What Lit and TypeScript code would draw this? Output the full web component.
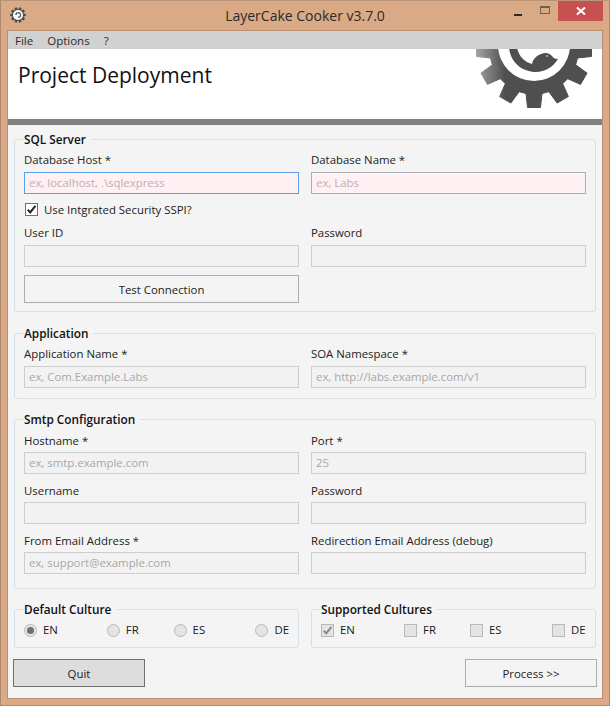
import { LitElement, html, css, svg } from "lit";
import { customElement } from "lit/decorators.js";

function gearPath(cx: number, cy: number, n: number, rTip: number, rRoot: number, hwTip: number, hwRoot: number) {
  const pts: string[] = [];
  for (let i = 0; i < n; i++) {
    const a = (i * 2 * Math.PI) / n;
    const ux = Math.cos(a), uy = Math.sin(a);
    const p = (r: number, w: number) => `${(cx + ux * r - uy * w).toFixed(2)} ${(cy + uy * r + ux * w).toFixed(2)}`;
    pts.push(p(rRoot, -hwRoot), p(rTip, -hwTip), p(rTip, hwTip), p(rRoot, hwRoot));
  }
  return "M" + pts.join("L") + "Z";
}

const Logo = () => svg`
  <svg class="logo" viewBox="476 49 116 61" aria-hidden="true">
    <defs>
      <linearGradient id="g" gradientUnits="userSpaceOnUse" x1="476" y1="0" x2="505" y2="0">
        <stop offset="0" stop-color="#a4a4a6"/><stop offset="1" stop-color="#4f4f51"/>
      </linearGradient>
    </defs>
    <path d=${gearPath(534, 50, 12, 57.5, 43.5, 6.5, 8)} fill="url(#g)" stroke="url(#g)" stroke-width="1" stroke-linejoin="round"/>
    <circle cx="534" cy="50" r="44" fill="url(#g)"/>
    <circle cx="534" cy="45" r="36" fill="#fff"/>
    <path d="M509 47 L517 47 C518 55 524 62 532 64 C533 58 539 53 546 53 C548 53 550 54 552 56 C553 58 555 59 558 59 C553 67 545 72 536 72 C522 72 510 62 509 47 Z" fill="#4f4f51"/>
    <circle cx="547" cy="56" r="0.8" fill="#fff"/>
  </svg>`;

const Icon = () => svg`
  <svg class="appicon" viewBox="0 0 16 16" aria-hidden="true">
    <path d=${gearPath(8, 8, 10, 7.8, 5.6, 1.1, 1.5)} fill="#4b4b4d"/>
    <circle cx="8" cy="8" r="5" fill="#fff"/>
    <path d="M5.2 8 a3 3 0 1 1 3 3 v-1.4 a1.7 1.7 0 1 0 -1.6 -1.6 z" fill="#555"/>
  </svg>`;

@customElement("app-root")
export class AppRoot extends LitElement {
  static styles = css`
    :host {
      display: block;
      font-family: "Open Sans", "Noto Sans", sans-serif;
      font-size: 11.4px;
      color: #1a1a1a;
    }
    * { box-sizing: border-box; }
    .window {
      width: 610px;
      height: 706px;
      background: #d9aa85;
      border: 1px solid #ad8a6e;
      border-top-color: #b8957a;
      padding: 0 7px 7px 7px;
      display: flex;
      flex-direction: column;
    }
    .titlebar {
      height: 30px;
      display: grid;
      grid-template-columns: 1fr auto 1fr;
      align-items: start;
    }
    .appicon { width: 16px; height: 16px; margin: 6px 0 0 2px; display: block; }
    .title {
      text-align: center;
      font-size: 14px;
      line-height: 30px;
      color: #2b2b2b;
    }
    .controls { display: flex; justify-content: flex-end; margin-right: -1px; }
    .ctl { width: 27px; height: 20px; display: flex; align-items: center; justify-content: center; }
    .ctl.close { width: 45px; background: #c75050; }
    .min { width: 8px; height: 2px; background: #2b2b2b; margin-top: 7px; }
    .max { width: 10px; height: 8px; border: 1px solid #6e5f52; border-top-width: 2px; margin-top: -3px; }
    .x { display: block; width: 10px; height: 10px; }
    .client {
      flex: 1;
      outline: 1px solid #b98f6f;
      display: flex;
      flex-direction: column;
      background: #f4f4f4;
      min-height: 0;
    }
    .menu {
      height: 18px;
      background: #d1d1d1;
      display: flex;
      align-items: center;
      gap: 14px;
      padding: 0 0 0 7px;
      font-size: 11.5px;
      color: #2a2a2a;
    }
    .head {
      height: 70px;
      background: #fff;
      display: flex;
      justify-content: space-between;
      align-items: flex-start;
      padding-left: 10px;
    }
    .head h1 {
      margin: 11px 0 0 0;
      font-weight: 400;
      font-size: 21px;
      line-height: 30px;
      color: #111;
    }
    .logo { width: 116px; height: 61px; margin-right: 10px; display: block; flex: none; }
    .rule { height: 6px; background: #808080; flex: none; }
    .body {
      flex: 1;
      padding: 6px 6px 0 6px;
      display: flex;
      flex-direction: column;
    }
    fieldset {
      margin: 0;
      min-width: 0;
      border: 1px solid #d6dfe6;
      border-radius: 3px;
      padding: 0 9px;
    }
    legend {
      padding: 0 5px 0 0;
      font-weight: 600;
      font-size: 11.8px;
      line-height: 17px;
      height: 16px;
      color: #111;
    }
    .grid {
      display: grid;
      grid-template-columns: 275px 275px;
      column-gap: 12px;
    }
    .field { display: flex; flex-direction: column; }
    .lbl { line-height: 14px; height: 16px; color: #222; }
    .input {
      height: 22px;
      margin-top: 3px;
      border: 1px solid #cdcdcd;
      background: #f2f2f2;
      color: #a8a8a8;
      padding: 0 0 0 4px;
      line-height: 20px;
      white-space: nowrap;
      overflow: hidden;
    }
    .input.req { background: #fef0f3; border-color: #abadb3; color: #bbb0b2; }
    .input.focus { border-color: #5a9fe6; }
    .sql { height: 181px; }
    .sql .f1 { padding-top: 6px; }
    .check-row { height: 32px; padding: 9px 0 0 1px; display: flex; align-items: flex-start; gap: 6px; grid-column: 1 / 3; }
    .box {
      width: 13px; height: 13px; flex: none;
      border: 1px solid #707070; background: #fff;
      display: block;
    }
    .box svg { display: block; width: 11px; height: 11px; }
    .check-row span { line-height: 14px; }
    .btn {
      border: 1px solid #adadad;
      background: #f4f4f4;
      display: flex;
      align-items: center;
      justify-content: center;
      color: #222;
    }
    .test { height: 28px; margin-top: 8px; }
    .app { height: 74px; margin-top: 13px; }
    .app .field { padding-top: 6px; }
    .smtp { height: 178px; margin-top: 12px; }
    .smtp .grid { row-gap: 10px; padding-top: 7px; }
    .smtp .input { margin-top: 2px; }
    .cult-row { display: grid; grid-template-columns: 285px 285px; column-gap: 12px; margin-top: 12px; }
    .cult { height: 47px; }
    .opts { display: flex; height: 16px; margin-top: 5px; }
    .opt { display: flex; align-items: center; gap: 6px; line-height: 16px; }
    .radio {
      width: 13px; height: 13px; border-radius: 50%;
      border: 1px solid #b9b9b9; background: #e4e4e4;
      display: flex; align-items: center; justify-content: center; flex: none;
    }
    .radio i { display: block; width: 7px; height: 7px; border-radius: 50%; background: #6e6e6e; }
    .sq { border-color: #b9b9b9; background: #e4e4e4; }
    .sq svg path { stroke: #8a8a8a; }
    .o1 { width: 83px; }
    .o2 { width: 67px; }
    .o3 { width: 82px; }
    .s1 { width: 83px; }
    .s2 { width: 66px; }
    .s3 { width: 82px; }
    .footer { display: flex; justify-content: space-between; margin: 11px -1px 0 -1px; }
    .footer .btn { width: 132px; height: 28px; }
    .btn.quit { background: #dddddd; border-color: #707070; }
  `;

  private field(label: string, ph = "", cls = "") {
    return html`<div class="field"><div class="lbl">${label}</div><div class="input ${cls}">${ph}</div></div>`;
  }

  private tick() {
    return svg`<svg viewBox="0 0 11 11"><path d="M1.8 5.6 L4.2 8.4 L9.4 1.8" fill="none" stroke="#222" stroke-width="2"/></svg>`;
  }

  render() {
    const defaults = [["EN", "o1", true], ["FR", "o2", false], ["ES", "o3", false], ["DE", "", false]] as const;
    const supp = [["EN", "s1", true], ["FR", "s2", false], ["ES", "s3", false], ["DE", "", false]] as const;
    return html`
      <div class="window">
        <div class="titlebar">
          <div>${Icon()}</div>
          <div class="title">LayerCake Cooker v3.7.0</div>
          <div class="controls">
            <div class="ctl"><span class="min"></span></div>
            <div class="ctl"><span class="max"></span></div>
            <div class="ctl close">
              <svg class="x" viewBox="0 0 10 10"><path d="M1 1.5 L9 8.5 M9 1.5 L1 8.5" stroke="#fff" stroke-width="2" fill="none"/></svg>
            </div>
          </div>
        </div>
        <div class="client">
          <div class="menu"><span>File</span><span>Options</span><span>?</span></div>
          <div class="head"><h1>Project Deployment</h1>${Logo()}</div>
          <div class="rule"></div>
          <div class="body">
            <fieldset class="sql">
              <legend>SQL Server</legend>
              <div class="grid">
                <div class="f1">${this.field("Database Host *", "ex, localhost, .\\sqlexpress", "req focus")}</div>
                <div class="f1">${this.field("Database Name *", "ex, Labs", "req")}</div>
                <div class="check-row"><span class="box">${this.tick()}</span><span>Use Intgrated Security SSPI?</span></div>
                ${this.field("User ID")}
                ${this.field("Password")}
                <div class="btn test">Test Connection</div>
              </div>
            </fieldset>
            <fieldset class="app">
              <legend>Application</legend>
              <div class="grid">
                ${this.field("Application Name *", "ex, Com.Example.Labs")}
                ${this.field("SOA Namespace *", "ex, http://labs.example.com/v1")}
              </div>
            </fieldset>
            <fieldset class="smtp">
              <legend>Smtp Configuration</legend>
              <div class="grid">
                ${this.field("Hostname *", "ex, smtp.example.com")}
                ${this.field("Port *", "25")}
                ${this.field("Username")}
                ${this.field("Password")}
                ${this.field("From Email Address *", "ex, support@example.com")}
                ${this.field("Redirection Email Address (debug)")}
              </div>
            </fieldset>
            <div class="cult-row">
              <fieldset class="cult">
                <legend>Default Culture</legend>
                <div class="opts">
                  ${defaults.map(([t, c, on]) => html`<div class="opt ${c}"><span class="radio">${on ? html`<i></i>` : ""}</span><span>${t}</span></div>`)}
                </div>
              </fieldset>
              <fieldset class="cult">
                <legend>Supported Cultures</legend>
                <div class="opts">
                  ${supp.map(([t, c, on]) => html`<div class="opt ${c}"><span class="box sq">${on ? this.tick() : ""}</span><span>${t}</span></div>`)}
                </div>
              </fieldset>
            </div>
            <div class="footer">
              <div class="btn quit">Quit</div>
              <div class="btn">Process &gt;&gt;</div>
            </div>
          </div>
        </div>
      </div>`;
  }
}
